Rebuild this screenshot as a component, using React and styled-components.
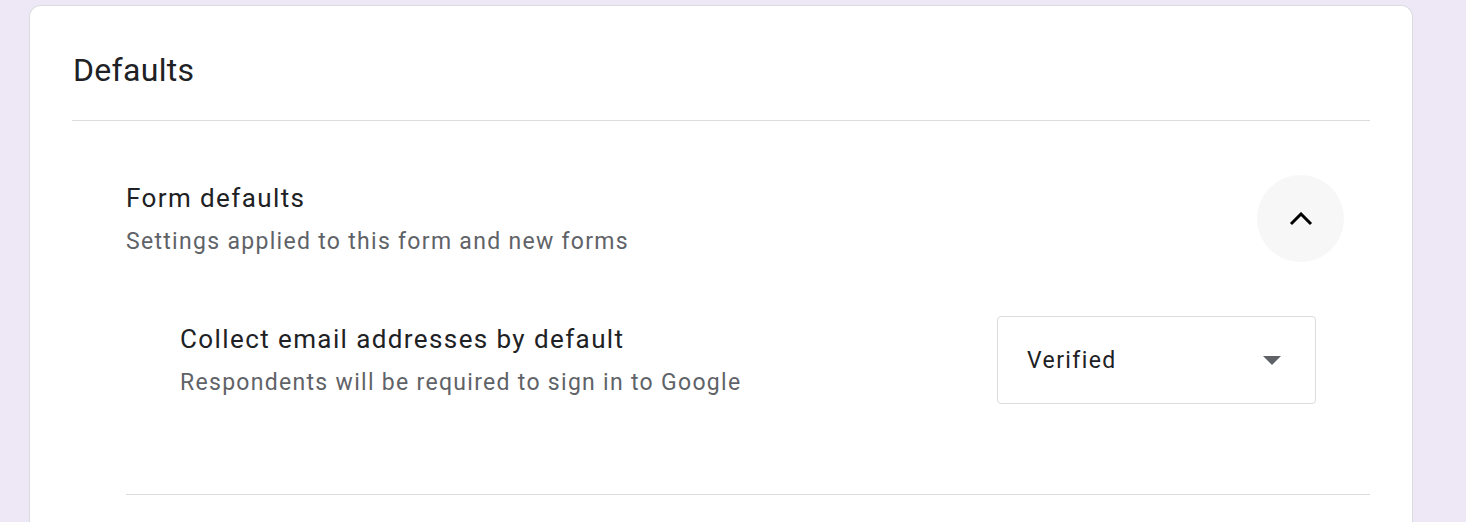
import React from "react";
import styled, { createGlobalStyle } from "styled-components";

const Global = createGlobalStyle`
  html, body { margin: 0; padding: 0; background: #ede7f6; }
  body { font-family: Roboto, "Noto Sans", Arial, sans-serif; overflow: hidden; }
`;

const Page = styled.div`
  padding: 5px 53px 0 29px;
  height: 522px;
  box-sizing: border-box;
`;

const Card = styled.section`
  background: #fff;
  border: 1px solid #dadce0;
  border-bottom: none;
  border-radius: 12px 12px 0 0;
  padding: 0 42px;
  height: 560px;
  box-sizing: border-box;
`;

const CardTitle = styled.h1`
  margin: 0;
  font-weight: 400;
  font-size: 32px;
  letter-spacing: 0.3px;
  line-height: 36px;
  color: #202124;
  padding: 46px 1px 32px;
  border-bottom: 1px solid #dadce0;
`;

const Section = styled.div`
  padding-left: 54px;
`;

const SectionHead = styled.div`
  display: flex;
  align-items: center;
  justify-content: space-between;
  padding: 54px 26px 0 0;
`;

const TextBlock = styled.div`
  display: flex;
  flex-direction: column;
  gap: ${(p) => p.$gap || 8}px;
`;

const Heading = styled.div`
  font-size: 26px;
  letter-spacing: 1.4px;
  line-height: 32px;
  color: #202124;
`;

const Sub = styled.div`
  font-size: 23px;
  letter-spacing: 1.3px;
  line-height: 28px;
  color: #5f6368;
`;

const RoundButton = styled.button`
  width: 87px;
  height: 87px;
  border-radius: 50%;
  border: none;
  background: #f7f7f7;
  display: flex;
  align-items: center;
  justify-content: center;
  padding: 0;
`;

const ItemRow = styled.div`
  display: flex;
  align-items: center;
  justify-content: space-between;
  padding: 54px 54px 90px 54px;
  border-bottom: 1px solid #dadce0;
`;

const Select = styled.div`
  width: 319px;
  height: 88px;
  box-sizing: border-box;
  border: 1px solid #dadce0;
  border-radius: 4px;
  display: flex;
  align-items: center;
  justify-content: space-between;
  padding: 0 34px 0 29px;
  font-size: 23px;
  letter-spacing: 1.4px;
  color: #202124;
`;

export default function App() {
  return (
    <>
      <Global />
      <Page>
        <Card>
          <CardTitle>Defaults</CardTitle>
          <Section>
            <SectionHead>
              <TextBlock $gap={14}>
                <Heading>Form defaults</Heading>
                <Sub>Settings applied to this form and new forms</Sub>
              </TextBlock>
              <RoundButton aria-label="Collapse">
                <svg width="24" height="14" viewBox="0 0 24 14">
                  <path d="M2 12 L12 2 L22 12" fill="none" stroke="#000" strokeWidth="3" />
                </svg>
              </RoundButton>
            </SectionHead>
            <ItemRow>
              <TextBlock $gap={14}>
                <Heading>Collect email addresses by default</Heading>
                <Sub>Respondents will be required to sign in to Google</Sub>
              </TextBlock>
              <Select>
                <span>Verified</span>
                <svg width="18" height="9" viewBox="0 0 18 9">
                  <path d="M0 0 L18 0 L9 9 Z" fill="#5f6368" />
                </svg>
              </Select>
            </ItemRow>
          </Section>
        </Card>
      </Page>
    </>
  );
}
